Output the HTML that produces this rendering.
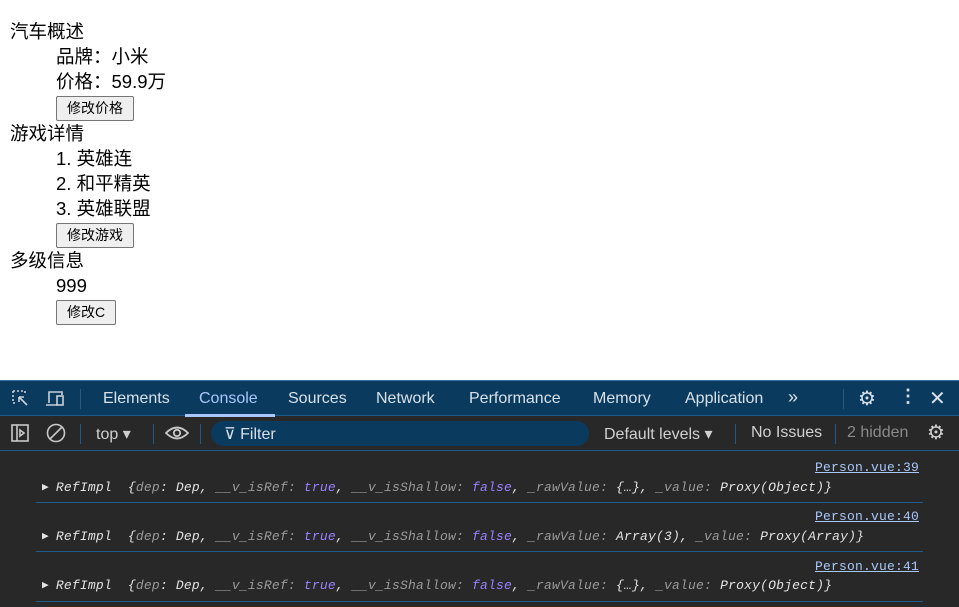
<!DOCTYPE html>
<html><head><meta charset="utf-8"><style>
*{margin:0;padding:0;box-sizing:border-box}
body{width:959px;height:607px;overflow:hidden;background:#fff;font-family:"Liberation Sans","Noto Sans CJK SC",sans-serif;position:relative}
.t{position:absolute;font-size:18.5px;color:#000;line-height:20px;white-space:nowrap}
.b{position:absolute;left:56px;height:25px;border:1px solid #767676;border-radius:2px;background:#efefef;font-size:14px;padding:0 10px;line-height:23px;font-family:"Liberation Sans","Noto Sans CJK SC",sans-serif}
#dt{position:absolute;left:0;top:380px;width:959px;height:227px;background:#282828}
#tb{position:absolute;left:0;top:0;width:959px;height:36px;background:#0a3b5f;border-top:1px solid #3a6ea0;border-bottom:1px solid #1f5a88}
.tab{position:absolute;top:9px;font-size:16px;color:#d8e0e8;font-family:"Liberation Sans",sans-serif}
#tb2{position:absolute;left:0;top:36px;width:959px;height:35px;border-bottom:1px solid #1f5a88}
.s{position:absolute;font-size:16px;color:#d0d0d0;top:8px;font-family:"Liberation Sans",sans-serif}
.sep{position:absolute;width:1px;background:#1f5a88}
.row{position:absolute;left:36px;width:887px;border-bottom:1px solid #1f5a88;height:1px}
.lk{position:absolute;right:40px;font-family:"Liberation Mono",monospace;font-size:13px;color:#a8c7fa;text-decoration:underline;letter-spacing:0.2px}
.lg{position:absolute;left:42px;font-family:"Liberation Mono",monospace;font-style:italic;font-size:13px;color:#e3e3e3;white-space:nowrap;letter-spacing:0.2px}
.tri{font-style:normal;font-size:11px;vertical-align:1px;margin-right:7px}
.g{color:#9a9a9a}.p{color:#9980ff}
</style></head><body>
<div class="t" style="left:10px;top:22px">汽车概述</div>
<div class="t" style="left:56px;top:47px">品牌：小米</div>
<div class="t" style="left:56px;top:72px">价格：59.9万</div>
<button class="b" style="top:96px">修改价格</button>
<div class="t" style="left:10px;top:124px">游戏详情</div>
<div class="t" style="left:56px;top:149px">1. 英雄连</div>
<div class="t" style="left:56px;top:174px">2. 和平精英</div>
<div class="t" style="left:56px;top:199px">3. 英雄联盟</div>
<button class="b" style="top:223px">修改游戏</button>
<div class="t" style="left:10px;top:251px">多级信息</div>
<div class="t" style="left:56px;top:276px">999</div>
<button class="b" style="top:300px">修改C</button>
<div id="dt">
<div id="tb">
<svg style="position:absolute;left:11px;top:8px" width="20" height="20" viewBox="0 0 20 20" fill="none" stroke="#c8d0d8" stroke-width="1.6"><path d="M2 2h12M2 2v12M2 14h3M14 2v3" stroke-dasharray="2 2"/><path d="M8 8l8 8M8 8h5M8 8v5"/></svg>
<svg style="position:absolute;left:45px;top:8px" width="22" height="20" viewBox="0 0 22 20" fill="none" stroke="#c8d0d8" stroke-width="1.6"><path d="M4 14V3h13v3M1 16h11"/><rect x="12" y="7" width="6" height="9"/></svg>
<div class="sep" style="left:80px;top:8px;height:20px;background:#2a5a80"></div>
<div class="tab" style="left:103px">Elements</div>
<div class="tab" style="left:199px;color:#a8c7fa">Console</div>
<div style="position:absolute;left:185px;top:33px;width:90px;height:3px;background:#a8c7fa"></div>
<div class="tab" style="left:288px">Sources</div>
<div class="tab" style="left:376px">Network</div>
<div class="tab" style="left:469px">Performance</div>
<div class="tab" style="left:593px">Memory</div>
<div class="tab" style="left:685px">Application</div>
<div class="tab" style="left:788px;font-size:18px;top:6px">»</div>
<div class="sep" style="left:843px;top:8px;height:20px;background:#2a5a80"></div>
<div class="tab" style="left:858px;font-size:20px;top:5px">⚙</div>
<div class="tab" style="left:899px;font-size:18px;top:5px;font-weight:bold">⋮</div>
<div class="tab" style="left:929px;font-size:20px;top:5px">✕</div>
</div>
<div id="tb2">
<svg style="position:absolute;left:11px;top:8px" width="19" height="19" viewBox="0 0 19 19" fill="none" stroke="#c8c8c8" stroke-width="1.6"><rect x="1" y="1" width="16" height="16"/><path d="M6 1v16M9 6l4 3-4 3z"/></svg>
<svg style="position:absolute;left:46px;top:7px" width="20" height="20" viewBox="0 0 20 20" fill="none" stroke="#c8c8c8" stroke-width="1.6"><circle cx="10" cy="10" r="8.5"/><path d="M4 16L16 4"/></svg>
<div class="sep" style="left:80px;top:8px;height:20px"></div>
<div class="s" style="left:96px">top ▾</div>
<div class="sep" style="left:153px;top:8px;height:20px"></div>
<svg style="position:absolute;left:165px;top:9px" width="24" height="16" viewBox="0 0 24 16" fill="none" stroke="#c8c8c8" stroke-width="1.8"><path d="M1 8Q12-3 23 8Q12 19 1 8z"/><circle cx="12" cy="8" r="3.2"/></svg>
<div class="sep" style="left:200px;top:8px;height:20px"></div>
<div style="position:absolute;left:211px;top:5px;width:378px;height:25px;border-radius:13px;background:#0a3b5f"></div>
<div class="s" style="left:224px;color:#d8e0e8">⊽ Filter</div>
<div class="s" style="left:604px">Default levels ▾</div>
<div class="sep" style="left:735px;top:8px;height:20px"></div>
<div class="s" style="left:751px">No Issues</div>
<div class="sep" style="left:835px;top:8px;height:20px"></div>
<div class="s" style="left:847px;color:#8a8a8a">2 hidden</div>
<div class="s" style="left:927px;font-size:20px;top:4px">⚙</div>
</div>
<div class="lk" style="top:80px">Person.vue:39</div>
<div class="lg" style="top:100px"><span class="tri">▶</span>RefImpl &nbsp;{<span class="g">dep</span>: Dep, <span class="g">__v_isRef:</span> <span class="p">true</span>, <span class="g">__v_isShallow:</span> <span class="p">false</span>, <span class="g">_rawValue:</span> {…}, <span class="g">_value:</span> Proxy(Object)}</div>
<div class="row" style="top:122px"></div>
<div class="lk" style="top:129px">Person.vue:40</div>
<div class="lg" style="top:149px"><span class="tri">▶</span>RefImpl &nbsp;{<span class="g">dep</span>: Dep, <span class="g">__v_isRef:</span> <span class="p">true</span>, <span class="g">__v_isShallow:</span> <span class="p">false</span>, <span class="g">_rawValue:</span> Array(3), <span class="g">_value:</span> Proxy(Array)}</div>
<div class="row" style="top:171px"></div>
<div class="lk" style="top:179px">Person.vue:41</div>
<div class="lg" style="top:198px"><span class="tri">▶</span>RefImpl &nbsp;{<span class="g">dep</span>: Dep, <span class="g">__v_isRef:</span> <span class="p">true</span>, <span class="g">__v_isShallow:</span> <span class="p">false</span>, <span class="g">_rawValue:</span> {…}, <span class="g">_value:</span> Proxy(Object)}</div>
<div class="row" style="top:221px"></div>
</div>
</body></html>
